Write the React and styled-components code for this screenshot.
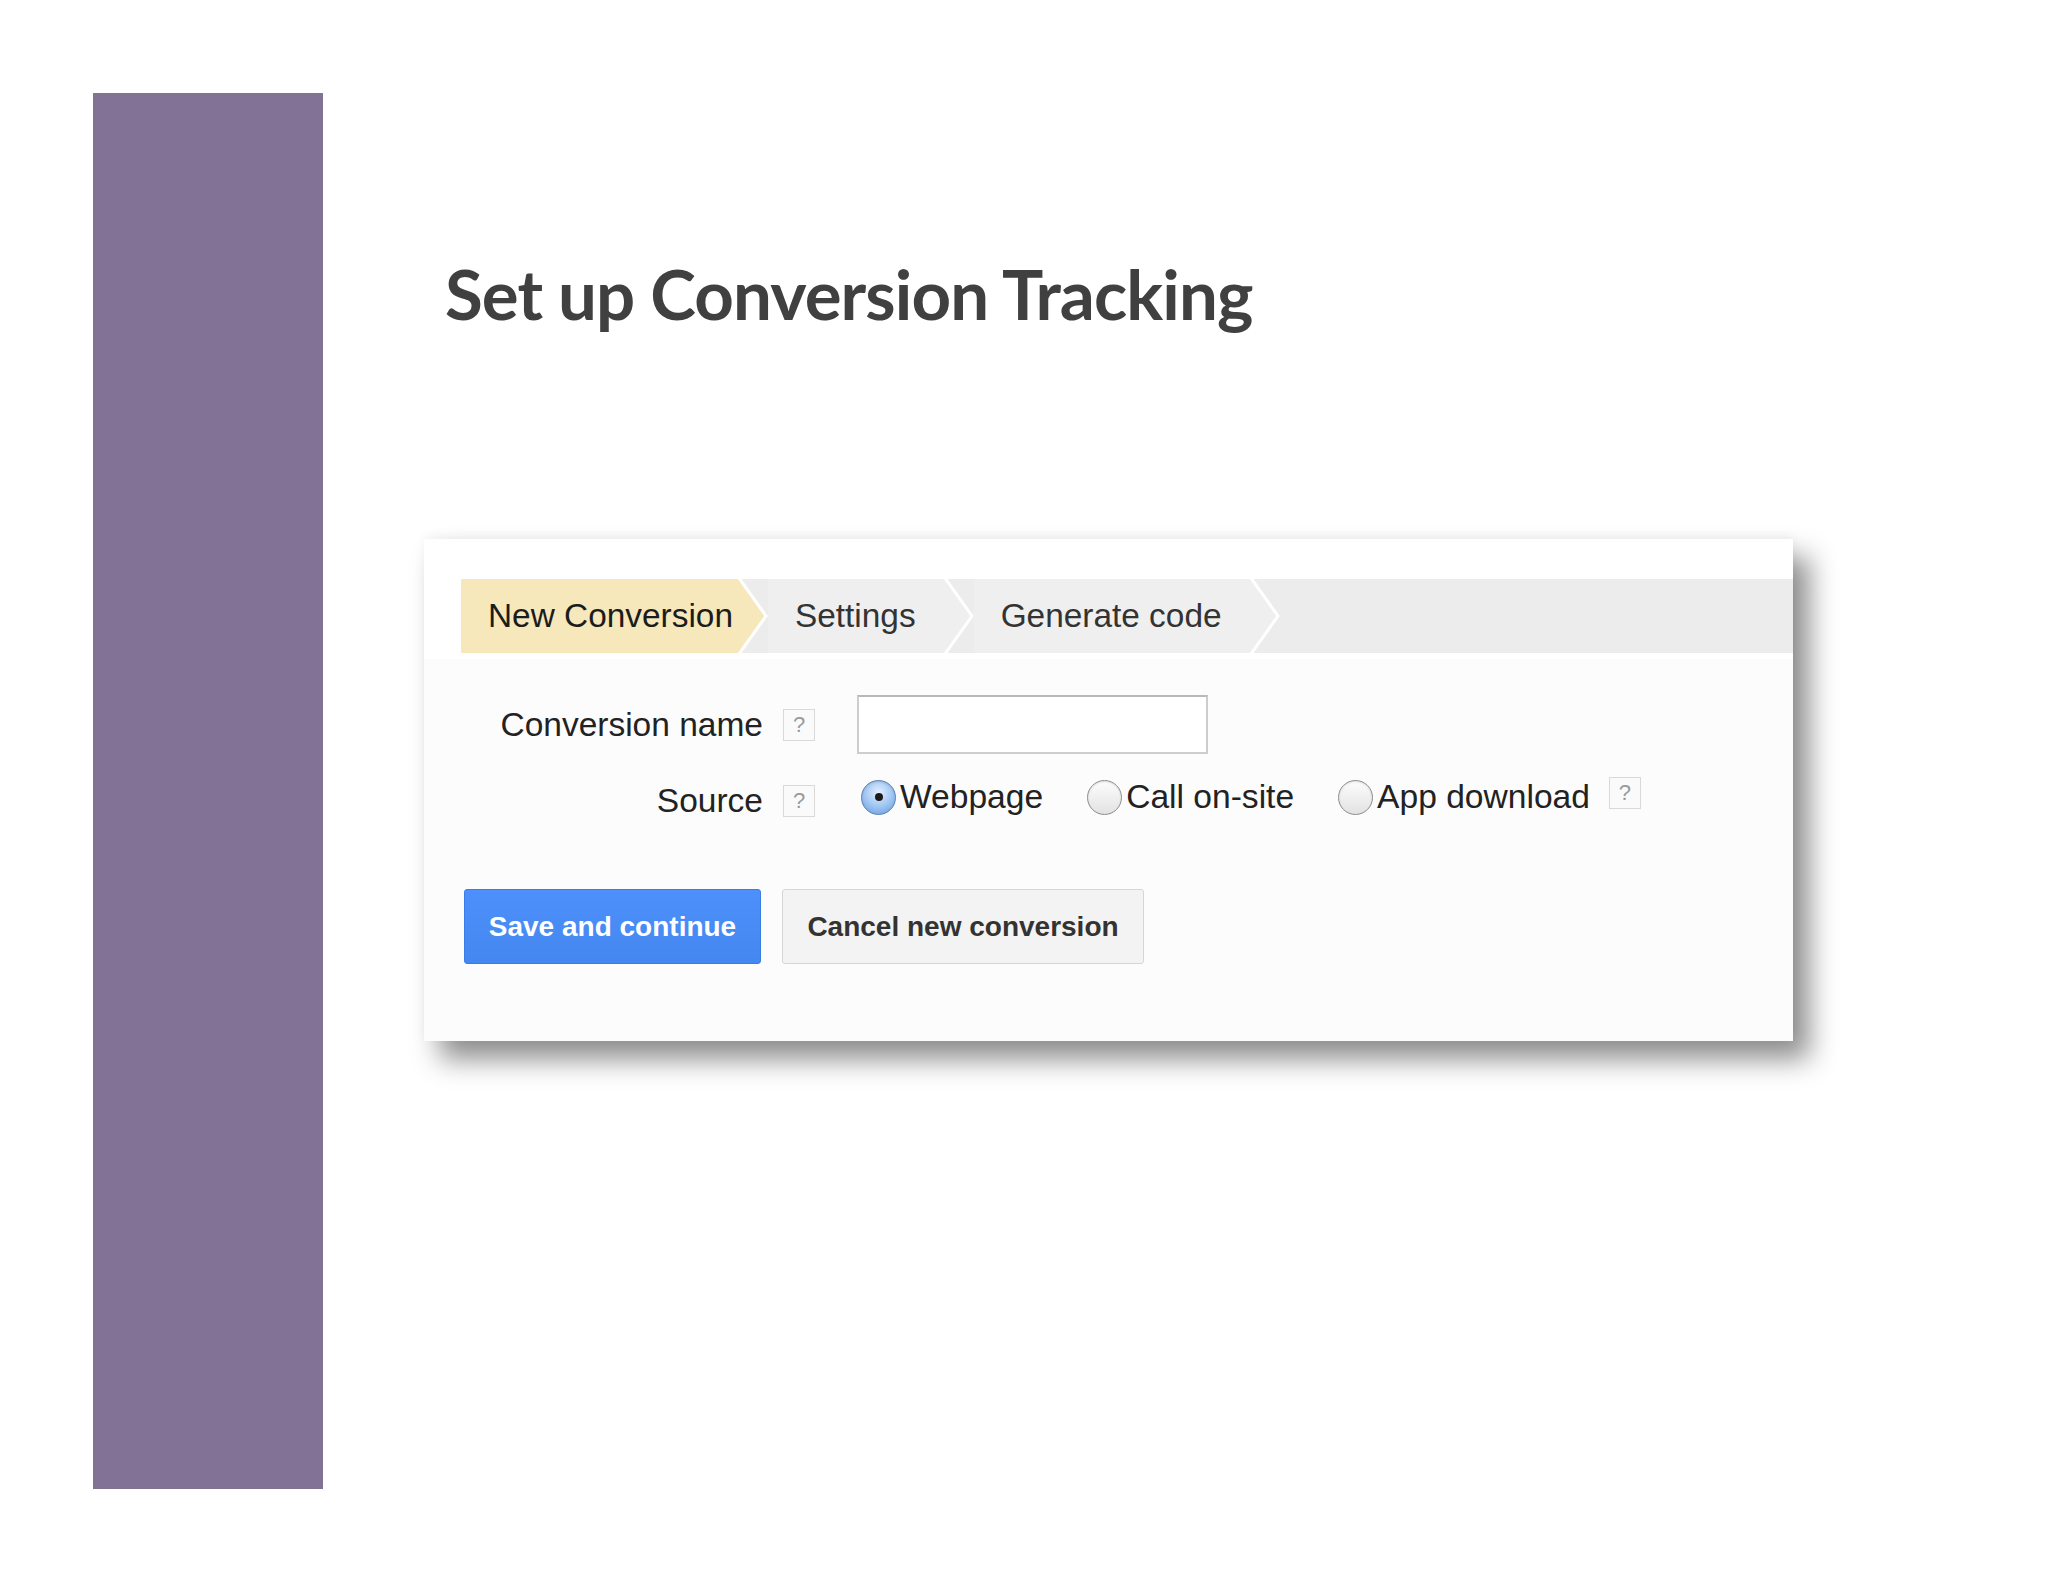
import React from 'react';
import styled, { createGlobalStyle } from 'styled-components';

const GlobalStyle = createGlobalStyle`
  html, body {
    margin: 0;
    padding: 0;
    background: #ffffff;
  }
  * {
    box-sizing: border-box;
  }
`;

const Page = styled.div`
  display: flex;
  align-items: flex-start;
  width: 2048px;
  height: 1582px;
  padding: 93px 0 0 93px;
  background: #ffffff;
  overflow: hidden;
`;

const SideBar = styled.div`
  flex: none;
  width: 230px;
  height: 1396px;
  background: #827295;
`;

const Main = styled.div`
  display: flex;
  flex-direction: column;
  padding-left: 101px;
`;

const Title = styled.h1`
  margin: 166px 0 0 21px;
  font-family: Lato, 'Open Sans', sans-serif;
  font-weight: 700;
  font-size: 69px;
  line-height: 1;
  color: #404040;
  letter-spacing: -0.9px;
`;

const Card = styled.div`
  margin-top: 211px;
  width: 1369px;
  height: 502px;
  padding: 40px 0 0 37px;
  background: linear-gradient(#ffffff 0, #ffffff 120px, #fcfcfd 120px);
  box-shadow: 16px 18px 26px rgba(0, 0, 0, 0.45), 0 -4px 10px rgba(0, 0, 0, 0.04);
  font-family: 'Liberation Sans', Arial, sans-serif;
  color: #222222;
`;

const TabBar = styled.div`
  display: flex;
  height: 74px;
  background: #ececec;
`;

const Tab = styled.div`
  display: flex;
  align-items: center;
  height: 100%;
  padding: 0 ${(p) => (p.$active ? '5px' : '28px')} 0 27px;
  background: ${(p) => (p.$active ? '#f6e8bb' : '#efefef')};
  font-size: 33.4px;
  color: ${(p) => (p.$active ? '#1c1c1c' : '#333333')};
  white-space: nowrap;
`;

const Chevron = ({ fill }) => (
  <svg width="30" height="74" viewBox="0 0 30 74" style={{ flex: 'none', display: 'block' }}>
    <rect x="0" y="0" width="30" height="74" fill="#ececec" />
    <polygon points="0,0 27,37 0,74" fill={fill} />
    <polyline points="1,-1 28,37 1,75" fill="none" stroke="#ffffff" strokeWidth="3" />
  </svg>
);

const Form = styled.div`
  display: grid;
  grid-template-columns: 302px 32px auto;
  column-gap: 20px;
  row-gap: 28px;
  align-items: center;
  margin-top: 42px;
`;

const Label = styled.div`
  text-align: right;
  font-size: 33.5px;
  color: #222222;
  white-space: nowrap;
`;

const Help = styled.span`
  display: inline-flex;
  align-items: center;
  justify-content: center;
  flex: none;
  width: 32px;
  height: 32px;
  border: 1.5px solid #d9d9d9;
  background: #fafafa;
  color: #9a9a9a;
  font-size: 22px;
  line-height: 1;
`;

const Control = styled.div`
  display: flex;
  align-items: center;
  margin-left: 22px;
`;

const TextInput = styled.input`
  width: 351px;
  height: 59px;
  border: 2px solid #cdcdcd;
  border-top-color: #b9b9b9;
  background: #ffffff;
  outline: none;
`;

const RadioGroup = styled.div`
  display: flex;
  align-items: center;
  gap: 44px;
  margin-left: 4px;
  margin-top: -8px;
`;

const RadioOption = styled.label`
  display: flex;
  align-items: center;
  gap: 4px;
  font-size: 33.6px;
  color: #222222;
  white-space: nowrap;
`;

const RadioDot = styled.span`
  display: flex;
  align-items: center;
  justify-content: center;
  width: 35px;
  height: 35px;
  border-radius: 50%;
  border: 1.5px solid ${(p) => (p.$checked ? '#5a82b4' : '#8e8e8e')};
  background: ${(p) =>
    p.$checked
      ? 'radial-gradient(circle at 50% 35%, #e4efff 0%, #9cc3f2 55%, #5f97dc 100%)'
      : 'linear-gradient(#fdfdfd, #e2e2e2)'};
  box-shadow: inset 0 1px 2px rgba(0, 0, 0, 0.12);

  &::after {
    content: '';
    display: ${(p) => (p.$checked ? 'block' : 'none')};
    width: 8px;
    height: 8px;
    border-radius: 50%;
    background: #1b1b1b;
  }
`;

const SourceHelp = styled(Help)`
  margin: -16px 0 0 19px;
`;

const Actions = styled.div`
  display: flex;
  gap: 21px;
  margin: 69px 0 0 3px;
`;

const Button = styled.button`
  height: 75px;
  padding: 0 22px;
  border-radius: 3px;
  font-family: 'Liberation Sans', Arial, sans-serif;
  font-weight: 700;
  font-size: 28px;
  cursor: pointer;
  border: 1.5px solid ${(p) => (p.$primary ? '#3b7de6' : '#d6d6d6')};
  background: ${(p) => (p.$primary ? 'linear-gradient(#4d90fb, #4587f0)' : '#f3f3f3')};
  color: ${(p) => (p.$primary ? '#ffffff' : '#333333')};
  width: ${(p) => (p.$primary ? '297px' : '362px')};
`;

const sources = [
  { id: 'webpage', label: 'Webpage', checked: true },
  { id: 'call', label: 'Call on-site' },
  { id: 'app', label: 'App download' },
];

export default function App() {
  return (
    <>
      <GlobalStyle />
      <Page>
        <SideBar />
        <Main>
          <Title>Set up Conversion Tracking</Title>
          <Card>
            <TabBar>
              <Tab $active>New Conversion</Tab>
              <Chevron fill="#f6e8bb" />
              <Tab>Settings</Tab>
              <Chevron fill="#efefef" />
              <Tab>Generate code</Tab>
              <Chevron fill="#efefef" />
            </TabBar>

            <Form>
              <Label>Conversion name</Label>
              <Help>?</Help>
              <Control>
                <TextInput type="text" />
              </Control>

              <Label>Source</Label>
              <Help>?</Help>
              <Control>
                <RadioGroup>
                  {sources.map((s) => (
                    <RadioOption key={s.id}>
                      <RadioDot $checked={s.checked} />
                      {s.label}
                    </RadioOption>
                  ))}
                </RadioGroup>
                <SourceHelp>?</SourceHelp>
              </Control>
            </Form>

            <Actions>
              <Button $primary>Save and continue</Button>
              <Button>Cancel new conversion</Button>
            </Actions>
          </Card>
        </Main>
      </Page>
    </>
  );
}
